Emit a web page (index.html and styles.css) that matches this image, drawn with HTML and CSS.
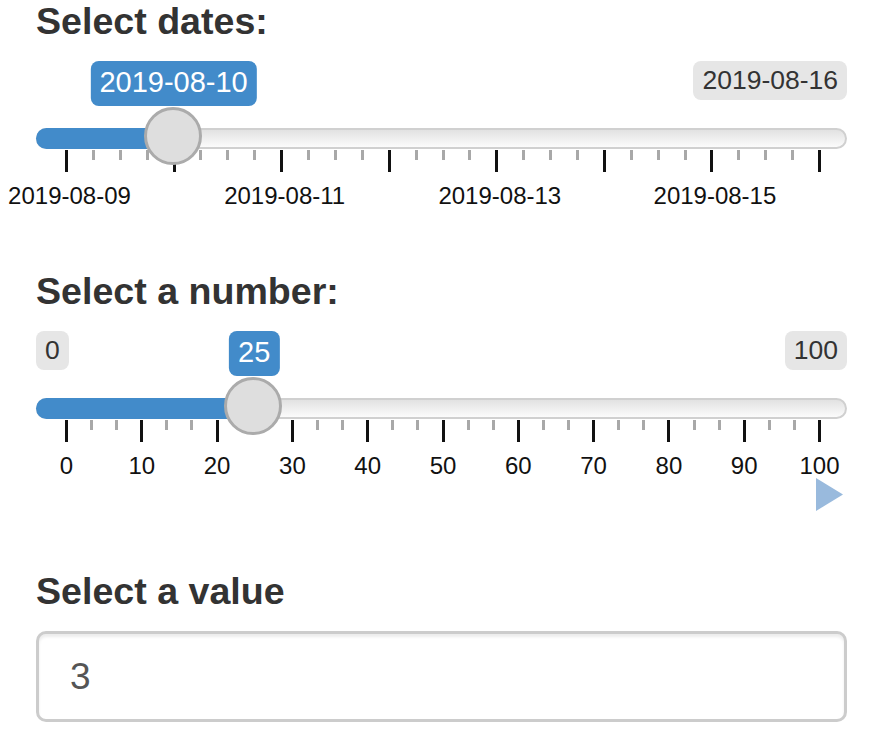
FILE: index.html
```html
<!DOCTYPE html>
<html lang="en">
<head>
  <meta charset="UTF-8" />
  <meta name="viewport" content="width=device-width, initial-scale=1.0"/>
  <title>Inputs</title>
  <link rel="stylesheet" href="styles.css">
</head>
<body>

  <!-- Date range slider -->
  <div class="field">
    <label class="field-label">Select dates:</label>
    <div class="slider dates">
      <div class="bubbles">
        <span class="bubble single" style="--pos: 0.142857">2019-08-10</span>
        <span class="bubble max">2019-08-16</span>
      </div>
      <div class="rail">
        <div class="track"></div>
        <div class="fill" style="--pos: 0.142857"></div>
        <div class="handle" style="--pos: 0.142857"></div>
      </div>
      <div class="grid" data-steps="28" data-major="4"
           data-labels="2019-08-09,,2019-08-11,,2019-08-13,,2019-08-15,"></div>
    </div>
  </div>

  <!-- Number slider with play button -->
  <div class="field">
    <label class="field-label">Select a number:</label>
    <div class="slider">
      <div class="bubbles">
        <span class="bubble min">0</span>
        <span class="bubble single" style="--pos: 0.25">25</span>
        <span class="bubble max">100</span>
      </div>
      <div class="rail">
        <div class="track"></div>
        <div class="fill" style="--pos: 0.25"></div>
        <div class="handle" style="--pos: 0.25"></div>
      </div>
      <div class="grid" data-steps="30" data-major="3"
           data-labels="0,10,20,30,40,50,60,70,80,90,100"></div>
      <div class="play-row">
        <svg class="play" width="27" height="33" viewBox="0 0 27 33">
          <polygon points="0,0 27,16.5 0,33" />
        </svg>
      </div>
    </div>
  </div>

  <!-- Text input -->
  <div class="field field-text">
    <label class="field-label" for="value-input">Select a value</label>
    <input id="value-input" class="text-input" type="text" value="3">
  </div>

  <script>
    document.addEventListener("DOMContentLoaded", function () {
      // build tick marks and labels for every slider grid
      document.querySelectorAll(".grid").forEach(function (grid) {
        const steps = parseInt(grid.dataset.steps, 10);
        const major = parseInt(grid.dataset.major, 10);
        const labels = grid.dataset.labels.split(",");

        const ticks = document.createElement("div");
        ticks.className = "ticks";
        const row = document.createElement("div");
        row.className = "grid-labels";

        for (let i = 0; i <= steps; i++) {
          const pos = i / steps;
          const tick = document.createElement("span");
          tick.className = i % major === 0 ? "tick" : "tick small";
          tick.style.setProperty("--pos", pos);
          ticks.appendChild(tick);

          if (i % major === 0) {
            const text = labels[i / major];
            if (text) {
              const label = document.createElement("span");
              label.className = "grid-label";
              label.style.setProperty("--pos", pos);
              label.textContent = text;
              row.appendChild(label);
            }
          }
        }
        grid.appendChild(ticks);
        grid.appendChild(row);
      });
    });
  </script>

</body>
</html>
```

FILE: styles.css
```css
* {
  box-sizing: border-box;
  margin: 0;
  padding: 0;
}

body {
  font-family: "Liberation Sans", Arial, sans-serif;
  color: #333;
  background: #fff;
  padding: 0 30px 0 36px;
}

.field + .field {
  margin-top: 62px;
}

.field.field-text {
  margin-top: 59px;
}

.field-label {
  display: block;
  font-size: 37.6px;
  font-weight: bold;
  line-height: 42px;
}

/* slider */
.slider {
  margin-top: 19px;
}

.bubbles {
  position: relative;
  height: 45px;
}

.bubble {
  position: absolute;
  top: 0;
  font-size: 26.5px;
  line-height: 39px;
  padding: 0 9px;
  background: #e6e6e6;
  color: #333;
  border-radius: 8px;
  white-space: nowrap;
}

.bubble.min {
  left: 0;
}

.bubble.max {
  right: 0;
}

.bubble.single {
  left: calc(30px + var(--pos) * (100% - 58px));
  transform: translateX(-50%);
  font-size: 29px;
  padding: 2px 9px 4px;
  background: #428bca;
  color: #fff;
  z-index: 1;
}

.rail {
  position: relative;
  height: 44px;
  padding-top: 22px;
}

.track {
  height: 21px;
  border: 2px solid #d0d0d0;
  border-radius: 11px;
  background: linear-gradient(to bottom, #e2e2e2, #fbfbfb);
}

.fill {
  position: absolute;
  top: 22px;
  left: 0;
  height: 21px;
  width: calc(30px + var(--pos) * (100% - 58px));
  background: #428bca;
  border-radius: 11px 0 0 11px;
}

.handle {
  position: absolute;
  top: 1px;
  left: calc(var(--pos) * (100% - 58px));
  width: 58px;
  height: 58px;
  border-radius: 50%;
  border: 3px solid #ababab;
  background: #dedede;
  z-index: 2;
}

/* grid */
.ticks {
  position: relative;
  height: 22px;
}

.tick {
  position: absolute;
  top: 0;
  left: calc(29px + var(--pos) * (100% - 58px));
  width: 3px;
  height: 22px;
  background: #111;
}

.tick.small {
  height: 10px;
  background: #a8a8a8;
}

.grid-labels {
  position: relative;
  height: 24px;
  margin-top: 12px;
}

.grid-label {
  position: absolute;
  top: 0;
  left: calc(30.5px + var(--pos) * (100% - 58px));
  transform: translateX(-50%);
  font-size: 24px;
  line-height: 24px;
  color: #111;
  white-space: nowrap;
}

.dates .grid-label {
  margin-left: 3px;
}

.play-row {
  display: flex;
  justify-content: flex-end;
  padding-right: 4px;
}

.play {
  display: block;
  fill: #99badd;
}

/* text input */
.text-input {
  display: block;
  width: 100%;
  height: 91px;
  margin-top: 19px;
  padding: 0 31px;
  font-family: inherit;
  font-size: 37px;
  color: #555;
  background: #fff;
  border: 3px solid #ccc;
  border-radius: 10px;
  box-shadow: inset 0 3px 3px rgba(0, 0, 0, 0.075);
  outline: none;
}
```
